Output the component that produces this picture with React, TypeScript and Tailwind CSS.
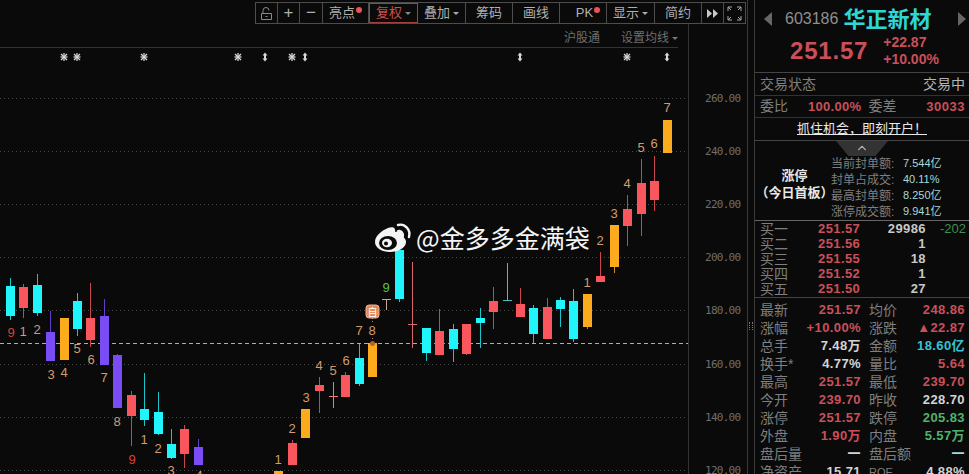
import { ChevronUp } from "lucide-react";

const CJK = "font-['Liberation_Sans','Noto_Sans_CJK_SC',sans-serif]";

type Candle = [number, number, number, number, number, string];

const RED = "#f9565d";
const CYAN = "#1ff5fb";
const PURPLE = "#7a4cf5";
const ORANGE = "#fbab1b";

// x, wick top, body top, body bottom, wick bottom, colour
const candles: Candle[] = [
  [10, 278, 286, 316, 320, CYAN],
  [23, 284, 287, 308, 318, RED],
  [37, 274, 285, 313, 316, CYAN],
  [50, 311, 332, 361, 361, PURPLE],
  [64, 318, 318, 360, 360, ORANGE],
  [77, 293, 301, 329, 336, CYAN],
  [90, 283, 318, 340, 347, RED],
  [104, 299, 316, 365, 365, PURPLE],
  [117, 354, 355, 408, 408, PURPLE],
  [131, 391, 395, 416, 446, RED],
  [144, 373, 409, 420, 426, CYAN],
  [158, 392, 412, 434, 435, CYAN],
  [171, 429, 444, 458, 459, CYAN],
  [184, 425, 429, 454, 468, RED],
  [198, 439, 447, 465, 465, PURPLE],
  [278, 471, 471, 476, 476, ORANGE],
  [292, 440, 443, 465, 465, RED],
  [305, 409, 409, 438, 438, ORANGE],
  [319, 377, 385, 391, 413, RED],
  [345, 372, 375, 397, 397, RED],
  [359, 343, 358, 384, 386, CYAN],
  [372, 343, 343, 377, 377, ORANGE],
  [399, 250, 250, 299, 302, CYAN],
  [426, 328, 328, 353, 361, CYAN],
  [439, 309, 331, 355, 355, RED],
  [453, 324, 329, 349, 362, CYAN],
  [466, 324, 324, 354, 355, RED],
  [480, 308, 318, 323, 348, CYAN],
  [493, 287, 301, 312, 329, RED],
  [520, 288, 304, 317, 317, RED],
  [533, 305, 308, 334, 343, CYAN],
  [547, 298, 307, 339, 339, RED],
  [560, 297, 300, 309, 327, CYAN],
  [573, 289, 301, 339, 342, CYAN],
  [587, 294, 294, 327, 329, ORANGE],
  [600, 252, 276, 282, 282, RED],
  [614, 225, 225, 267, 273, ORANGE],
  [627, 195, 209, 226, 246, RED],
  [641, 159, 183, 214, 236, RED],
  [654, 156, 181, 200, 211, RED],
  [667, 120, 120, 153, 153, ORANGE],
];

// flat candles: x, y, wick top, wick bottom, colour
const dojis: [number, number, number, number, string][] = [
  [333, 396, 382, 408, "#f07a78"],
  [386, 299, 299, 310, "#c9a58c"],
  [412, 324, 262, 348, "#d9686a"],
  [507, 300, 263, 301, "#4fbcc4"],
];

const PEACH = "#d59b6d";
const labels: [number, number, string, string][] = [
  [11, 337, "9", "#d8403c"], [23, 336, "1", PEACH], [37, 334, "2", PEACH],
  [51, 379, "3", PEACH], [64, 377, "4", PEACH], [77, 353, "5", PEACH],
  [91, 364, "6", PEACH], [104, 382, "7", PEACH], [117, 426, "8", PEACH],
  [132, 464, "9", "#d8403c"], [144, 444, "1", PEACH], [158, 453, "2", PEACH],
  [171, 475, "3", PEACH], [199, 480, "4", PEACH],
  [278, 464, "1", PEACH], [292, 433, "2", PEACH], [306, 402, "3", PEACH],
  [319, 370, "4", PEACH], [333, 375, "5", PEACH], [346, 365, "6", PEACH],
  [359, 335, "7", PEACH], [372, 335, "8", PEACH], [386, 292, "9", "#5fc04a"],
  [587, 287, "1", PEACH], [600, 245, "2", PEACH], [614, 218, "3", PEACH],
  [627, 188, "4", PEACH], [641, 152, "5", PEACH], [654, 148, "6", PEACH],
  [667, 112, "7", PEACH],
];

const grid: [number, string][] = [
  [98, "260.00"], [151, "240.00"], [204, "220.00"], [257, "200.00"],
  [310, "180.00"], [364, "160.00"], [417, "140.00"], [470, "120.00"],
];

const markers: [number, string][] = [
  [64, "star"], [77, "star"], [144, "star"], [238, "star"], [265, "arrow"],
  [292, "star"], [305, "arrow"], [520, "arrow"], [627, "star"], [667, "arrow"],
];

function Chart() {
  return (
    <svg viewBox="0 49 747 425" className="block h-[425px] w-[747px]">
      {grid.map(([y]) => (
        <line key={y} x1={0} x2={692} y1={y + 0.5} y2={y + 0.5} stroke="#4a4a4a" strokeDasharray="1 3" />
      ))}
      <line x1={688.5} x2={688.5} y1={49} y2={474} stroke="#333" />
      <line x1={0} x2={688} y1={343.5} y2={343.5} stroke="#d9a27a" strokeDasharray="4 3" />
      {grid.map(([y, t]) => (
        <text key={t} x={705} y={y + 4} fill="#6e6e6e" fontSize={11} fontFamily="'DejaVu Sans Mono', monospace" textLength={36}>
          {t}
        </text>
      ))}
      {markers.map(([x, kind], i) =>
        kind === "star" ? (
          <g key={i} stroke="#d8d8d8" strokeWidth={1.3}>
            <line x1={x - 3.5} x2={x + 3.5} y1={57} y2={57} />
            <line x1={x} x2={x} y1={53} y2={61} />
            <line x1={x - 3} x2={x + 3} y1={54} y2={60} />
            <line x1={x - 3} x2={x + 3} y1={60} y2={54} />
          </g>
        ) : (
          <path key={i} d={`M${x} 52.5l2.5 3h-1.5v3h1.5l-2.5 3l-2.5-3h1.5v-3h-1.5z`} fill="#d8d8d8" />
        ),
      )}
      {candles.map(([x, wt, bt, bb, wb, c]) => (
        <g key={x}>
          <line x1={x + 0.5} x2={x + 0.5} y1={wt} y2={wb} stroke={c} strokeOpacity={0.8} />
          <rect x={x - 4} y={bt} width={9} height={bb - bt} fill={c} />
        </g>
      ))}
      {dojis.map(([x, y, t, b, c]) => (
        <g key={x} stroke={c}>
          <line x1={x + 0.5} x2={x + 0.5} y1={t} y2={b} />
          <line x1={x - 4} x2={x + 5} y1={y + 0.5} y2={y + 0.5} />
        </g>
      ))}
      <line x1={372.5} x2={372.5} y1={318} y2={323} stroke="#c98a5e" strokeDasharray="1 2" />
      <line x1={372.5} x2={372.5} y1={338} y2={343} stroke="#c98a5e" strokeDasharray="1 2" />
      <circle cx={372.5} cy={343.5} r={2.5} fill="#b8602a" />
      <rect x={366} y={305} width={13} height={13} rx={3} fill="#e08a5c" stroke="#f2b48e" />
      <text x={372.5} y={315.5} fill="#fff" fontSize={10} textAnchor="middle" fontFamily="'Noto Sans CJK SC', sans-serif">
        自
      </text>
      {labels.map(([x, y, t, c], i) => (
        <text key={i} x={x} y={y} fill={c} fontSize={13} textAnchor="middle" fontFamily="'Liberation Sans', sans-serif">
          {t}
        </text>
      ))}
      {/* weibo logo */}
      <g>
        <path
          d="M375 242c0-6 6-11 13-14 5-2 8 0 7 4 3-1 7-1 8 1 1 2 0 3 0 4 2 1 3 3 3 5 0 6-8 10-16 10-8 0-15-4-15-10z"
          fill="#f4f4f4"
        />
        <ellipse cx={388} cy={243} rx={9} ry={7} fill="#0a0a0a" />
        <ellipse cx={387} cy={243} rx={5} ry={4.2} fill="#f4f4f4" />
        <circle cx={386} cy={243.5} r={2} fill="#0a0a0a" />
        <path d="M398 231c3-1 6 2 5 6" fill="none" stroke="#f4f4f4" strokeWidth={2} strokeLinecap="round" />
        <path d="M398 225c7-2 13 5 11 12" fill="none" stroke="#f4f4f4" strokeWidth={2.4} strokeLinecap="round" />
      </g>
      <text x={416} y={248} fill="#f5f5f5" fontSize={25} fontFamily="'Noto Sans CJK SC', sans-serif">
        @金多多金满袋
      </text>
    </svg>
  );
}

function Toolbar() {
  const cell = "flex items-center justify-center border-r border-[#4d4d4d] text-[13px] text-[#b0b0b0]";
  return (
    <div className="flex h-[24px] items-end justify-end pr-[1px]">
      <div className={`flex h-[22px] border border-[#4d4d4d] border-r-0 ${CJK}`}>
        <div className={`${cell} w-[22px]`}>
          <svg width="15" height="15" viewBox="0 0 15 15" fill="none" stroke="#8a8a8a">
            <path d="M2.5 7.5h10v6h-10zM4 7.5v-3a3 3 0 0 1 6 0" />
            <path d="M6.5 10.5h2" />
          </svg>
        </div>
        <div className={`${cell} w-[22px] text-[17px] font-light`}>+</div>
        <div className={`${cell} w-[23px] text-[17px]`}>−</div>
        <div className={`${cell} w-[46px] gap-[1px]`}>
          亮点
          <span className="mb-[6px] h-[6px] w-[6px] rounded-full bg-[#e8535a]" />
        </div>
        <div className={`${cell} w-[49px] gap-[3px] border border-[#a3413f] text-[#c8504c]`}>
          复权
          <span className="h-0 w-0 border-x-[3px] border-t-[3px] border-x-transparent border-t-[#888]" />
        </div>
        <div className={`${cell} w-[48px] gap-[3px]`}>
          叠加
          <span className="h-0 w-0 border-x-[3px] border-t-[3px] border-x-transparent border-t-[#aaa]" />
        </div>
        <div className={`${cell} w-[47px]`}>筹码</div>
        <div className={`${cell} w-[47px]`}>画线</div>
        <div className={`${cell} w-[47px] gap-[1px] pl-[10px] text-[11px]`}>
          PK
          <span className="mb-[6px] h-[6px] w-[6px] rounded-full bg-[#e8535a]" />
        </div>
        <div className={`${cell} w-[48px] gap-[3px]`}>
          显示
          <span className="h-0 w-0 border-x-[3px] border-t-[3px] border-x-transparent border-t-[#aaa]" />
        </div>
        <div className={`${cell} w-[47px]`}>简约</div>
        <div className={`${cell} w-[22px]`}>
          <svg width="11" height="9" viewBox="0 0 11 9" fill="#c8c8c8">
            <path d="M0 0l5 4.5-5 4.5zM6 0l5 4.5-5 4.5z" />
          </svg>
        </div>
        <div className={`${cell} w-[22px]`}>
          <svg width="15" height="15" viewBox="0 0 15 15" fill="none" stroke="#a8a8a8">
            <path d="M1 5V1h4M10 1h4v4M14 10v4h-4M5 14H1v-4M1 1l3 3M14 1l-3 3M14 14l-3-3M1 14l3-3" />
          </svg>
        </div>
      </div>
    </div>
  );
}

const RED_TEXT = "text-[#c9505a]";
const GRAY = "text-[#7f7f7f]";
const WHITE = "text-[#d4d4d4]";
const GREEN = "text-[#4fb36a]";
const TEAL = "text-[#35c3d0]";
const PALE = "text-[#a8d8d8]";

type Stat = [string, string, string, string, string, string];
const stats: Stat[] = [
  ["最新", "251.57", RED_TEXT, "均价", "248.86", RED_TEXT],
  ["涨幅", "+10.00%", RED_TEXT, "涨跌", "▲22.87", RED_TEXT],
  ["总手", "7.48万", WHITE, "金额", "18.60亿", TEAL],
  ["换手*", "4.77%", WHITE, "量比", "5.64", RED_TEXT],
  ["最高", "251.57", RED_TEXT, "最低", "239.70", RED_TEXT],
  ["今开", "239.70", RED_TEXT, "昨收", "228.70", WHITE],
  ["涨停", "251.57", RED_TEXT, "跌停", "205.83", GREEN],
  ["外盘", "1.90万", RED_TEXT, "内盘", "5.57万", GREEN],
  ["盘后量", "一", WHITE, "盘后额", "一", PALE],
  ["净资产", "15.71", WHITE, "ROE", "4.88%", WHITE],
];

const bids: [string, string, string, string][] = [
  ["买一", "251.57", "29986", "-202"],
  ["买二", "251.56", "1", ""],
  ["买三", "251.55", "18", ""],
  ["买四", "251.52", "1", ""],
  ["买五", "251.50", "27", ""],
];

const sealed: [string, string][] = [
  ["当前封单额:", "7.544亿"],
  ["封单占成交:", "40.11%"],
  ["最高封单额:", "8.250亿"],
  ["涨停成交额:", "9.941亿"],
];

function Quote() {
  return (
    <div className={`flex h-[474px] w-[215px] shrink-0 flex-col overflow-hidden border-l border-[#3a3a3a] ${CJK}`}>
      <div className="flex h-[73px] shrink-0 flex-col border-b border-[#444]">
        <div className="flex h-[34px] items-center pl-[9px] pr-[2px] pt-[4px]">
          <span className="h-0 w-0 border-y-[7px] border-r-[8px] border-y-transparent border-r-[#666]" />
          <span className="ml-[13px] text-[16px] text-[#8f8f8f]">603186</span>
          <span className="ml-[5px] text-[22px] font-bold text-[#2fd6d4]">华正新材</span>
          <span className="ml-auto mr-[1px] h-0 w-0 border-y-[7px] border-l-[8px] border-y-transparent border-l-[#666]" />
        </div>
        <div className="flex items-center pl-[35px]">
          <span className="text-[24px] font-bold leading-[28px] tracking-[0.8px] text-[#c9505a]">251.57</span>
          <div className="ml-[15px] flex flex-col text-[14px] font-bold leading-[17px] text-[#c9505a]">
            <span>+22.87</span>
            <span>+10.00%</span>
          </div>
        </div>
      </div>
      <div className="flex h-[23px] shrink-0 items-center justify-between border-b border-[#333] pl-[5px] pr-[4px] text-[14px]">
        <span className={GRAY}>交易状态</span>
        <span className="text-[#b5b5b5]">交易中</span>
      </div>
      <div className="flex h-[22px] shrink-0 items-center border-b border-[#333] pl-[5px] pr-[4px] text-[14px]">
        <span className={GRAY}>委比</span>
        <span className={`ml-[20px] text-[13px] font-bold tracking-[0.3px] ${RED_TEXT}`}>100.00%</span>
        <span className={`ml-[7px] ${GRAY}`}>委差</span>
        <span className={`ml-auto text-[13px] font-bold tracking-[0.5px] ${RED_TEXT}`}>30033</span>
      </div>
      <div className="flex h-[23px] shrink-0 items-center justify-center border-b border-[#444] text-[13px] text-[#e8e8e8] underline">
        {"抓住机会\uFF0C即刻开户\uFF01"}
      </div>
      <div className="relative flex h-[80px] shrink-0 items-center border-b border-[#666]">
        <div className="absolute left-[81px] top-0 flex h-[15px] w-[52px] justify-center bg-[#333] [clip-path:polygon(0_0,100%_0,76%_100%,24%_100%)]">
          <ChevronUp size={14} className="text-[#aaa]" />
        </div>
        <div className="flex w-[76px] shrink-0 flex-col items-center pl-[3px] pt-[7px] text-[13px] font-bold leading-[17px] text-[#e8e8e8]">
          <span>涨停</span>
          <span className="whitespace-nowrap">{"\uFF08今日首板\uFF09"}</span>
        </div>
        <div className="flex flex-col pt-[14px]">
          {sealed.map(([k, v]) => (
            <div key={k} className="flex h-[16px] items-center text-[12px]">
              <span className={`w-[72px] whitespace-nowrap ${GRAY}`}>{k}</span>
              <span className={`whitespace-nowrap text-[11px] ${PALE}`}>{v}</span>
            </div>
          ))}
        </div>
      </div>
      <div className="flex h-[77px] shrink-0 flex-col justify-center border-b border-[#444] pl-[5px] pr-[3px]">
        {bids.map(([n, p, q, d]) => (
          <div key={n} className="flex h-[15px] items-center">
            <span className={`w-[58px] text-[14px] ${GRAY}`}>{n}</span>
            <span className={`w-[44px] text-[13px] font-bold tracking-[0.4px] ${RED_TEXT}`}>{p}</span>
            <span className="w-[64px] text-right text-[13px] font-bold tracking-[0.4px] text-[#c8c8c8]">{q}</span>
            <span className="ml-auto text-[13px] text-[#3f8f4a]">{d}</span>
          </div>
        ))}
      </div>
      <div className="flex flex-col pl-[5px] pr-[4px] pt-[3px]">
        {stats.map(([a, av, ac, b, bv, bc]) => (
          <div key={a} className="flex h-[18px] shrink-0 items-center text-[14px]">
            <span className={`w-[40px] whitespace-nowrap ${GRAY}`}>{a}</span>
            <span className={`w-[61px] whitespace-nowrap text-right text-[13px] font-bold tracking-[0.4px] ${ac}`}>{av}</span>
            <span className={`ml-[8px] w-[40px] whitespace-nowrap ${GRAY} ${b === "ROE" ? "text-[11px]" : ""}`}>{b}</span>
            <span className={`ml-auto whitespace-nowrap text-[13px] font-bold tracking-[0.4px] ${bc}`}>{bv}</span>
          </div>
        ))}
      </div>
    </div>
  );
}

export default function App() {
  return (
    <div className="flex h-[474px] w-[969px] overflow-hidden bg-[#0a0a0a]">
      <div className="flex w-[748px] shrink-0 flex-col border-r border-[#3a3a3a]">
        <Toolbar />
        <div className={`flex h-[25px] w-[689px] border-r border-[#333] ${CJK}`}>
          <div className="flex h-[24px] w-[678px] items-center justify-end gap-[21px] border-b border-[#333] pt-[5px] text-[12px] text-[#6f6f6f]">
            <span>沪股通</span>
            <span className="flex items-center gap-[3px]">
              设置均线
              <span className="h-0 w-0 border-x-[3px] border-t-[3px] border-x-transparent border-t-[#777]" />
            </span>
          </div>
        </div>
        <Chart />
      </div>
      <div className="flex w-[6px] shrink-0 justify-center pt-[322px]">
        <div className="h-[8px] w-[4px] border-x border-dotted border-[#777]" />
      </div>
      <Quote />
    </div>
  );
}
